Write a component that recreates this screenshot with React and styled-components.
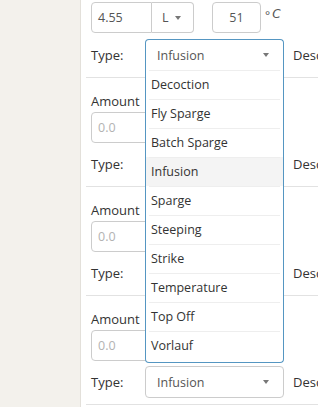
import React from "react";
import styled, { createGlobalStyle } from "styled-components";

const Global = createGlobalStyle`
  html, body { margin: 0; padding: 0; overflow: hidden; background: #fff; }
  body { font-family: "Open Sans", "Noto Sans", sans-serif; font-size: 13px; color: #333; }
`;

const Page = styled.div`
  display: flex;
  width: 318px;
  height: 407px;
  overflow: hidden;
`;

const Sidebar = styled.div`
  flex: 0 0 80px;
  background: #f3f1ec;
  border-right: 1px solid #e3e0da;
`;

const Main = styled.div`
  flex: 1;
  min-width: 0;
  padding-left: 5px;
  background: #fff;
`;

const Block = styled.div`
  border-bottom: 1px solid #e2e2e2;
  padding: ${(p) => (p.$first ? "2px" : "14px")} 0 6px 5px;
  width: 300px;
`;

const Label = styled.div`
  font-size: 13px;
  line-height: 18px;
  height: 18px;
  margin-bottom: 2px;
  color: #333;
`;

const FieldRow = styled.div`
  display: flex;
  align-items: flex-start;
`;

const Input = styled.div`
  box-sizing: border-box;
  height: 31px;
  width: ${(p) => p.$w}px;
  border: 1px solid #ccc;
  border-radius: ${(p) => p.$radius || "4px"};
  padding: 0 6px;
  display: flex;
  align-items: center;
  font-size: 12.5px;
  color: ${(p) => (p.$placeholder ? "#b3b3b3" : "#555")};
  margin-left: ${(p) => p.$ml || 0}px;
  background: #fff;
  text-align: ${(p) => p.$align || "left"};
  justify-content: ${(p) => (p.$align === "center" ? "center" : "flex-start")};
`;

const UnitButton = styled.div`
  box-sizing: border-box;
  height: 31px;
  width: 42px;
  border: 1px solid #ccc;
  border-left: none;
  border-radius: 0 4px 4px 0;
  display: flex;
  align-items: center;
  padding-left: 10px;
  gap: 6px;
  color: #555;
  font-size: 12.5px;
`;

const Caret = styled.span`
  display: inline-block;
  width: 0;
  height: 0;
  border-left: 3.5px solid transparent;
  border-right: 3.5px solid transparent;
  border-top: 4px solid #777;
`;

const Unit = styled.div`
  margin-left: 4px;
  margin-top: 5px;
  font-size: 12px;
  color: #555;
  display: flex;
  gap: 2px;
  & i { font-family: "DejaVu Sans", sans-serif; font-size: 12px; }
`;

const TypeRow = styled.div`
  display: flex;
  align-items: center;
  margin-top: ${(p) => (p.$first ? 6 : 5)}px;
  height: 32px;
`;

const TypeLabel = styled.div`
  width: 54px;
  color: #333;
  font-size: 13px;
`;

const SelectWrap = styled.div`
  position: relative;
  width: 139px;
  height: 32px;
`;

const SelectBox = styled.div`
  box-sizing: border-box;
  height: 32px;
  width: 139px;
  border: 1px solid ${(p) => (p.$open ? "#5596c2" : "#ccc")};
  border-bottom-color: ${(p) => (p.$open ? "transparent" : "#ccc")};
  border-radius: ${(p) => (p.$open ? "4px 4px 0 0" : "4px")};
  display: flex;
  align-items: center;
  justify-content: space-between;
  padding: 0 14px 0 11px;
  color: #555;
  font-size: 12.5px;
  background: #fff;
`;

const Menu = styled.ul`
  position: absolute;
  z-index: 5;
  top: 31px;
  left: 0;
  width: 139px;
  box-sizing: border-box;
  margin: 0;
  padding: 0 0 2px;
  list-style: none;
  background: #fff;
  border: 1px solid #5596c2;
  border-top: none;
  border-radius: 0 0 4px 4px;
`;

const Item = styled.li`
  position: relative;
  height: 29px;
  display: flex;
  align-items: center;
  padding-left: 5px;
  font-size: 12.5px;
  color: #333;
  background: ${(p) => (p.$active ? "#f4f4f4" : "transparent")};
  &::before {
    content: "";
    position: absolute;
    top: 0;
    left: 3px;
    right: 3px;
    border-top: 1px solid #eeeeee;
  }
`;

const Desc = styled.div`
  margin-left: 9px;
  color: #333;
  font-size: 13px;
  white-space: nowrap;
`;

const options = [
  "Decoction",
  "Fly Sparge",
  "Batch Sparge",
  "Infusion",
  "Sparge",
  "Steeping",
  "Strike",
  "Temperature",
  "Top Off",
  "Vorlauf",
];

function TypeSelect({ open }) {
  return (
    <SelectWrap>
      <SelectBox $open={open}>
        <span>Infusion</span>
        <Caret />
      </SelectBox>
      {open && (
        <Menu>
          {options.map((o) => (
            <Item key={o} $active={o === "Infusion"}>
              {o}
            </Item>
          ))}
        </Menu>
      )}
    </SelectWrap>
  );
}

function TypeLine({ first, open }) {
  return (
    <TypeRow $first={first}>
      <TypeLabel>Type:</TypeLabel>
      <TypeSelect open={open} />
      <Desc>Description</Desc>
    </TypeRow>
  );
}

function StepBlock() {
  return (
    <Block>
      <Label>Amount</Label>
      <FieldRow>
        <Input $w={120} $placeholder>0.0</Input>
      </FieldRow>
      <TypeLine />
    </Block>
  );
}

export default function App() {
  return (
    <>
      <Global />
      <Page>
        <Sidebar />
        <Main>
          <Block $first>
            <FieldRow>
              <Input $w={61} $radius="4px 0 0 4px">4.55</Input>
              <UnitButton>
                L <Caret />
              </UnitButton>
              <Input $w={49} $ml={18} $align="center">51</Input>
              <Unit>
                <span>°</span>
                <i>C</i>
              </Unit>
            </FieldRow>
            <TypeLine first open />
          </Block>
          <StepBlock />
          <StepBlock />
          <StepBlock />
        </Main>
      </Page>
    </>
  );
}
